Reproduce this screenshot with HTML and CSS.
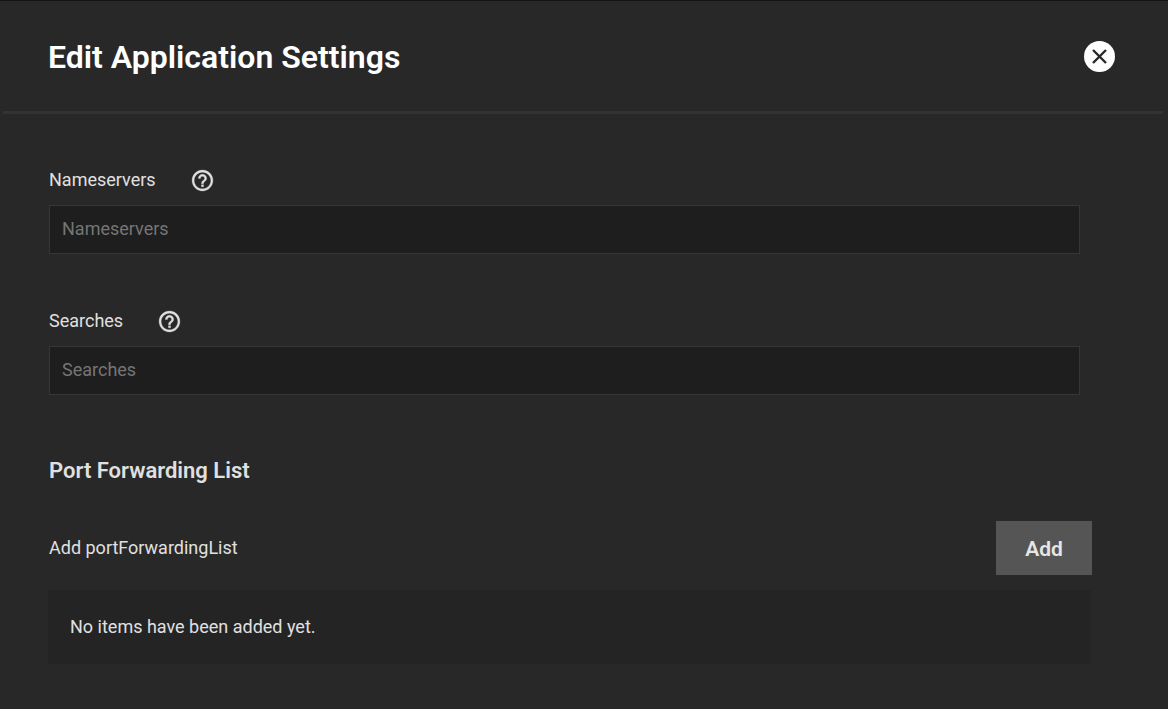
FILE: index.html
```html
<!DOCTYPE html>
<html lang="en">
  <head>
    <title>Edit Application Settings</title>
    <meta charset="utf-8">
    <link rel="stylesheet" href="styles.css">
  </head>
  <body>
    <div class="modal">
      <header class="modal-header">
        <h1>Edit Application Settings</h1>
        <button type="button" class="close-btn" aria-label="Close">
          <svg width="31" height="31" viewBox="0 0 31 31">
            <circle cx="15.5" cy="15.5" r="15.5" fill="#fff"/>
            <path d="M9 9L22 22M22 9L9 22" stroke="#282828" stroke-width="2.4"/>
          </svg>
        </button>
      </header>

      <form class="modal-body">
        <div class="field">
          <div class="field-label">
            <label for="nameservers">Nameservers</label>
            <button type="button" class="help-btn" aria-label="Help">
              <svg width="25" height="25" viewBox="0 0 24 24" fill="#e0e0e0" stroke="#e0e0e0" stroke-width=".3">
                <path d="M11 18h2v-2h-2v2zm1-16C6.48 2 2 6.48 2 12s4.48 10 10 10 10-4.480 10-10S17.520 2 12 2zm0 18c-4.410 0-8-3.590-8-8s3.590-8 8-8 8 3.590 8 8-3.590 8-8 8zm0-14c-2.210 0-4 1.790-4 4h2c0-1.100.9-2 2-2s2 .9 2 2c0 2-3 1.750-3 5h2c0-2.250 3-2.500 3-5 0-2.210-1.790-4-4-4z"/>
              </svg>
            </button>
          </div>
          <input type="text" id="nameservers" placeholder="Nameservers">
        </div>

        <div class="field">
          <div class="field-label">
            <label for="searches">Searches</label>
            <button type="button" class="help-btn" aria-label="Help">
              <svg width="25" height="25" viewBox="0 0 24 24" fill="#e0e0e0" stroke="#e0e0e0" stroke-width=".3">
                <path d="M11 18h2v-2h-2v2zm1-16C6.48 2 2 6.48 2 12s4.48 10 10 10 10-4.480 10-10S17.520 2 12 2zm0 18c-4.410 0-8-3.590-8-8s3.590-8 8-8 8 3.590 8 8-3.590 8-8 8zm0-14c-2.210 0-4 1.790-4 4h2c0-1.100.9-2 2-2s2 .9 2 2c0 2-3 1.750-3 5h2c0-2.250 3-2.500 3-5 0-2.210-1.790-4-4-4z"/>
              </svg>
            </button>
          </div>
          <input type="text" id="searches" placeholder="Searches">
        </div>

        <h2>Port Forwarding List</h2>
        <div class="list-header">
          <span>Add portForwardingList</span>
          <button type="button" class="add-btn">Add</button>
        </div>
        <div class="list-empty">No items have been added yet.</div>
      </form>
    </div>
  </body>
</html>
```

FILE: styles.css
```css
* {
  box-sizing: border-box;
}
body {
  margin: 0;
  background-color: #282828;
  color: #e0e0e0;
  font-family: Roboto, sans-serif;
  font-size: 18px;
  line-height: 24px;
}
button {
  border: none;
  padding: 0;
  background: none;
  font-family: inherit;
  cursor: pointer;
}
svg {
  display: block;
}
.modal {
  min-height: 100vh;
  border-top: 1px solid #141414;
}
.modal-header {
  display: flex;
  align-items: center;
  justify-content: space-between;
  margin: 0 5px 0 3px;
  padding: 30px 48px 30px 45px;
  border-bottom: 3px solid #333333;
}
h1 {
  margin: 0;
  padding-top: 2px;
  color: #ffffff;
  font-size: 32px;
  line-height: 48px;
  font-weight: 600;
}
.modal-body {
  padding: 52px 76px 45px 48px;
}
.field {
  margin: 0 12px 53px 1px;
}
.field-label {
  display: flex;
  align-items: center;
  gap: 34px;
  margin-bottom: 12px;
}
.help-btn {
  padding-top: 2px;
}
.field input {
  display: block;
  width: 100%;
  height: 49px;
  padding: 0 12px 2px;
  border: 1px solid #363636;
  background-color: #1e1e1e;
  color: #e0e0e0;
  font-family: inherit;
  font-size: 18px;
}
.field input::placeholder {
  color: #757575;
}
h2 {
  margin: 60px 0 34px 1px;
  font-size: 22px;
  line-height: 32px;
  font-weight: 600;
}
.list-header {
  display: flex;
  align-items: center;
  justify-content: space-between;
  margin-bottom: 15px;
  padding-left: 1px;
}
.add-btn {
  width: 96px;
  height: 54px;
  padding-top: 2px;
  background-color: #555555;
  color: #e6e6e6;
  font-size: 21px;
  font-weight: 600;
}
.list-empty {
  margin-right: 1px;
  padding: 25px 22px;
  background-color: #242424;
}
```
